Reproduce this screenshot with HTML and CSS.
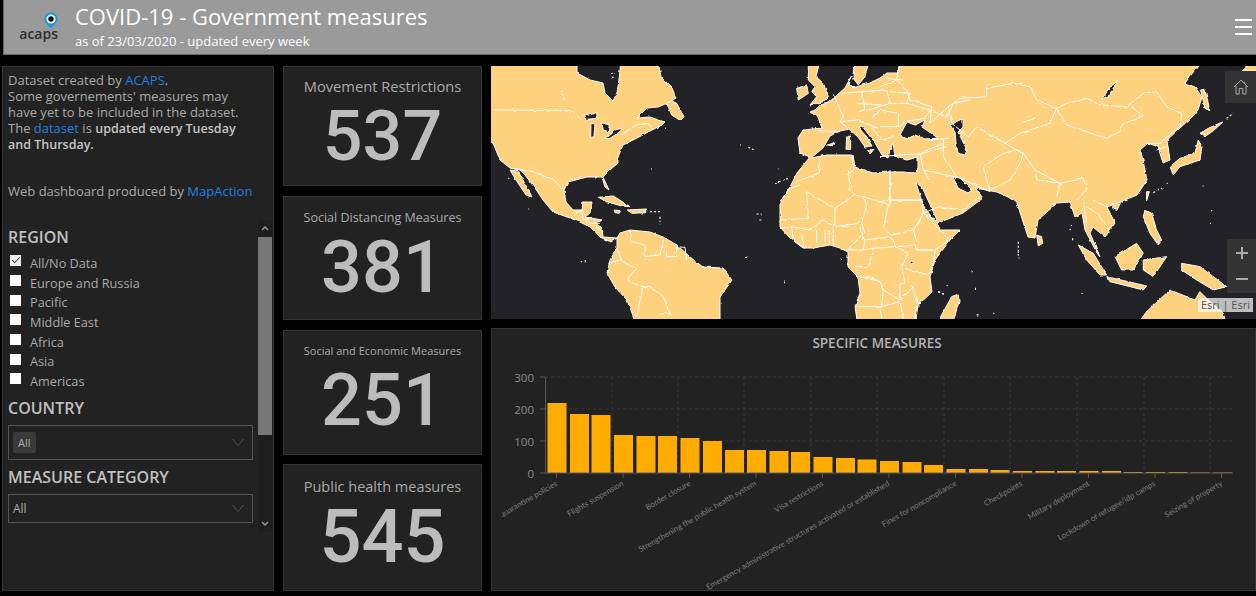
FILE: index.html
```html
<!DOCTYPE html>
<html lang="en">

<head>
    <meta charset="UTF-8">
    <meta name="viewport" content="width=device-width, initial-scale=1.0">
    <title>COVID-19 - Government measures</title>
    <link rel="stylesheet" href="styles.css">
</head>

<body>

    <header class="topbar">
        <div class="logo">
            <svg class="logo-pin" viewBox="0 0 14 17" width="14" height="17">
                <path d="M7 16.5 L2.2 11.6 A6.6 6.6 0 1 1 11.8 11.6 Z" fill="#1a9ad6" />
                <circle cx="7" cy="7" r="4.6" fill="#f2f6f8" />
                <circle cx="7" cy="7" r="2.7" fill="#111" />
            </svg>
            <span class="logo-name">acaps</span>
        </div>
        <div class="titles">
            <h1>COVID-19 - Government measures</h1>
            <p>as of 23/03/2020 - updated every week</p>
        </div>
        <div class="hamburger"><span></span><span></span><span></span></div>
    </header>

    <main class="dashboard">

        <section class="panel side">
            <div class="intro">
                <p>Dataset created by <a href="#">ACAPS</a>.<br>
                    Some governements' measures may<br>
                    have yet to be included in the dataset.<br>
                    The <a href="#">dataset</a> is <b>updated every Tuesday<br>
                    and Thursday.</b></p>
                <p class="credit">Web dashboard produced by <a href="#">MapAction</a></p>
            </div>

            <div class="filters">
                <div class="filter-list">
                    <h3>REGION</h3>
                    <ul class="regions">
                        <li><i class="box checked"></i>All/No Data</li>
                        <li><i class="box"></i>Europe and Russia</li>
                        <li><i class="box"></i>Pacific</li>
                        <li><i class="box"></i>Middle East</li>
                        <li><i class="box"></i>Africa</li>
                        <li><i class="box"></i>Asia</li>
                        <li><i class="box"></i>Americas</li>
                    </ul>
                    <h3 class="country-title">COUNTRY</h3>
                    <div class="select select-tall"><span class="chip">All</span><i class="caret"></i></div>
                    <h3 class="category-title">MEASURE CATEGORY</h3>
                    <div class="select select-short"><span>All</span><i class="caret"></i></div>
                </div>
                <div class="scrollbar">
                    <svg class="arrow" viewBox="0 0 14 17"><path d="M4 10 L7 7 L10 10" /></svg>
                    <div class="thumb"></div>
                    <svg class="arrow" viewBox="0 0 14 17"><path d="M4 7 L7 10 L10 7" /></svg>
                </div>
            </div>
        </section>

        <section class="stats">
            <div class="panel stat stat-a">
                <div class="stat-label">Movement Restrictions</div>
                <div class="stat-value">537</div>
            </div>
            <div class="panel stat stat-b">
                <div class="stat-label">Social Distancing Measures</div>
                <div class="stat-value">381</div>
            </div>
            <div class="panel stat stat-c">
                <div class="stat-label">Social and Economic Measures</div>
                <div class="stat-value">251</div>
            </div>
            <div class="panel stat stat-d">
                <div class="stat-label">Public health measures</div>
                <div class="stat-value">545</div>
            </div>
        </section>

        <section class="right">
            <div class="map">
                <svg class="world" viewBox="491 66 765 253" preserveAspectRatio="none">
                    <defs>
                        <!-- roughens the hand drawn coastlines -->
                        <filter id="rough" filterUnits="userSpaceOnUse" x="480" y="55" width="790" height="275">
                            <feTurbulence type="fractalNoise" baseFrequency="0.16" numOctaves="2" seed="4" />
                            <feDisplacementMap in="SourceGraphic" scale="2.6" xChannelSelector="R" yChannelSelector="G" />
                        </filter>
                    </defs>
                    <g filter="url(#rough)">
                    <!-- north america -->
                    <path class="land" d="M484 60 L577 60 L577 73 L590 80 L603 83 L605 93 L613 101 L617 93 L619 80 L621 60 L658 60 L661 77 L672 88 L676 98 L670 102 L658 107 L647 108 L637 118 L650 117 L665 122 L662 125 L650 131 L637 138 L623 145 L618 157 L618 163 L610 170 L603 177 L609 190 L605 187 L602 177 L587 177 L568 182 L564 190 L566 202 L573 210 L582 210 L583 202 L592 202 L590 213 L585 217 L602 220 L595 223 L602 228 L603 237 L617 238 L611 242 L600 237 L590 227 L580 222 L570 218 L553 212 L543 200 L535 188 L525 175 L520 170 L510 168 L500 160 L493 143 L484 140 Z" />
                    <path class="land" d="M510 170 L518 171 L530 193 L532 197 L526 195 L516 180 Z" />
                    <!-- south america -->
                    <path class="land" d="M617 238 L620 233 L630 230 L650 232 L663 237 L677 245 L690 257 L703 267 L723 268 L732 280 L720 297 L720 326 L637 326 L627 300 L615 287 L607 273 L610 260 L617 248 Z" />
                    <!-- africa and eurasia -->
                    <path class="land" d="M900 58 L898 73 L887 73 L880 78 L870 83 L862 85 L853 88 L848 83 L852 75 L845 88 L837 95 L828 103 L820 105 L815 110 L810 112 L818 117 L822 128 L803 130 L798 138 L800 153 L810 157 L797 173 L790 187 L780 202 L780 227 L790 238 L803 248 L813 248 L830 245 L840 248 L848 252 L848 267 L858 277 L860 293 L855 307 L858 326 L915 326 L918 305 L932 292 L930 277 L935 260 L950 240 L960 230 L940 230 L938 223 L963 213 L983 198 L975 188 L997 192 L1008 197 L1017 203 L1028 237 L1035 238 L1038 220 L1057 203 L1070 202 L1075 217 L1082 213 L1085 230 L1097 253 L1100 257 L1090 233 L1093 227 L1105 237 L1115 223 L1107 207 L1120 202 L1137 195 L1147 180 L1143 160 L1140 150 L1148 143 L1158 147 L1163 163 L1170 160 L1167 140 L1192 117 L1198 110 L1202 97 L1195 87 L1185 83 L1204 58 Z" />
                    <path class="land" d="M1242 71 L1250 64 L1260 62 L1260 71 Z" />
                    <!-- inland seas -->
                    <path class="sea" d="M811 158 L823 148 L830 136 L840 131 L849 129 L858 137 L865 147 L872 146 L867 137 L858 127 L862 126 L875 143 L882 155 L888 158 L890 150 L893 143 L895 157 L907 160 L918 157 L918 168 L915 173 L903 172 L890 172 L873 173 L855 167 L853 155 L840 155 L827 155 Z" />
                    <path class="sea" d="M900 135 L907 122 L915 125 L925 120 L922 127 L938 138 L925 139 L915 135 L907 139 Z" />
                    <path class="sea" d="M950 125 L963 119 L963 127 L958 132 L967 150 L965 155 L958 153 L956 143 L955 132 Z" />
                    <path class="sea" d="M916 183 L922 187 L937 220 L935 222 L923 205 Z" />
                    <path class="sea" d="M953 177 L960 178 L972 190 L968 193 L958 188 Z" />

                    <g transform="translate(490 60) scale(.3333)">
                        <path class="land" d="M530 130 L545 122 L560 130 L582 170 L572 182 L545 165 Z" />
                        <path class="land" d="M325 412 L370 408 L420 440 L395 438 L350 425 Z" />
                        <path class="land" d="M412 450 L470 447 L470 458 L425 460 Z" />
                        <path class="land" d="M372 450 L392 452 L388 460 L375 458 Z" />
                        <path class="sea" d="M280 170 L320 158 L322 175 L290 178 Z" />
                        <path class="sea" d="M303 190 L315 192 L312 230 L302 232 Z" />
                        <path class="sea" d="M335 188 L358 195 L355 215 L340 210 Z" />
                        <path class="sea" d="M345 235 L375 210 L395 205 L392 213 L360 235 Z" />
                        <path class="border" d="M15 150 L245 152 L275 180 M395 225 L440 195 L475 190 L490 210 M65 325 L130 335 L165 350 L190 358 L215 385 L225 385 M245 470 L275 450 L280 480 L305 472 M272 470 L300 490 L330 490 M318 500 L340 515" />
                        <path class="border" d="M420 512 L425 545 L465 555 L465 590 L510 585 L520 540 M525 560 L530 590 L560 590 L560 560 L585 562 L590 600 M355 610 L390 600 L440 625 L415 655 L415 665 L460 680 L450 720 L440 770 M380 565 L395 600 M460 680 L480 680 L520 710 L530 740 L545 770 M505 762 L540 760" />
                        <path class="speck" d="M362 40 h14 M365 55 h10 M215 90 l8 30 M750 255 h3 M775 262 l22 10 M483 327 h3 M865 322 v3 M855 370 l40 -15 M800 462 h15 M808 480 h6 M765 595 h6 M272 605 h16 M885 663 h3 M115 447 h3 M55 355 h3 M525 205 h3 M480 455 h30 M510 470 v25" />
                    </g>

                    <g transform="translate(790 60) scale(.3333)">
                        <path class="land" d="M55 10 L88 10 L78 50 L100 70 L115 110 L100 125 L60 135 L80 110 L65 95 L75 80 L55 60 Z" />
                        <path class="land" d="M20 85 L50 75 L55 100 L25 120 Z" />
                        <path class="land" d="M195 0 L238 0 L225 50 L205 75 L192 58 Z" />
                        <path class="land" d="M170 230 L182 228 L182 268 L168 268 Z" />
                        <path class="land" d="M232 272 L252 268 L240 282 Z" />
                        <path class="land" d="M112 255 L135 248 L130 258 Z" />
                        <path class="border" d="M85 212 L150 215 M130 100 L140 125 L160 170 L150 185 L175 205 M155 100 L215 95 L225 150 L205 155 M215 95 L290 90 L300 130 L235 150 M290 55 L340 60 M300 95 L360 100 L350 130 L295 130 M350 130 L420 150 L405 175 L345 185 L330 200 M270 150 L325 160 L325 200 L270 200 M150 185 L205 180 M205 180 L265 205 M245 205 L275 235 M260 245 L310 230 M380 285 L470 260 M415 240 L480 235 M420 150 L470 170 L490 130 L540 120 M185 285 L190 330 L170 345 M90 295 L85 340 L20 365 M300 340 L300 390 M320 55 L330 18 M200 130 L275 135 M240 180 L270 150" />
                    </g>

                    <g transform="translate(780 170) scale(.3333)">
                        <path class="land" d="M482 440 L515 380 L535 372 L537 395 L518 460 L482 460 Z" />
                        <circle class="sea" cx="395" cy="279" r="5" />
                        <path class="border" d="M60 45 L30 55 L0 95 M0 150 L85 145 L80 65 L165 115 M205 0 L210 60 L225 75 L165 115 M225 75 L250 80 L330 105 L330 0 M330 90 L425 92 M250 80 L260 105 L245 160 L255 190 M325 105 L310 175 L335 195 M165 170 L130 150 L90 180 L35 170 L0 175 M165 115 L165 170 L240 160 M160 170 L160 225 M240 170 L245 195 L205 240 M110 180 L110 220 M135 180 L135 220 M148 180 L148 220 M35 170 L40 210 L75 235 M65 190 L70 230 M245 195 L255 210 L330 200 L350 230 L405 225 M255 210 L250 240 M280 235 L350 230 L385 250 L365 290 L375 340 L360 340 L360 390 L310 360 L300 335 L265 320 L240 318 M205 240 L250 240 L280 235 L265 290 L225 290 M335 195 L400 180 L410 215 M400 180 L430 130 L470 170 L510 210 L465 240 L410 240 L405 225 M410 240 L465 240 L460 280 L445 315 L375 295 M425 92 L430 130 L465 150 M240 318 L300 335 L310 360 L305 410 L225 410 M360 390 L400 350 L410 400 L405 445 M305 410 L360 395 L370 445 M300 415 L305 445 M395 345 L412 390 L418 410" />
                        <path class="speck" d="M15 335 h3 M180 268 h8 M475 365 l18 8 M500 347 h3" />
                    </g>

                    <g transform="translate(880 0) scale(.3333)">
                        <path class="land" d="M870 500 L900 475 L945 460 L955 420 L966 440 L960 480 L900 500 L880 525 Z" />
                        <path class="land" d="M960 400 L985 385 L1030 365 L1000 392 L975 410 Z" />
                        <path class="land" d="M962 270 L975 268 L990 332 L975 325 Z" />
                        <path class="land" d="M800 575 L808 575 L800 602 Z" />
                        <path class="land" d="M795 630 L815 640 L830 690 L845 720 L835 735 L810 700 L790 650 Z" />
                        <path class="land" d="M595 735 L640 760 L680 825 L660 825 L620 780 Z" />
                        <path class="land" d="M680 830 L800 858 L790 870 L690 845 Z" />
                        <path class="land" d="M705 770 L770 730 L790 760 L760 810 L725 810 Z" />
                        <path class="land" d="M790 780 L860 770 L820 830 L790 810 Z" />
                        <path class="land" d="M905 790 L960 800 L1040 860 L1000 870 L950 840 L905 810 Z" />
                        <path class="land" d="M770 975 L800 935 L870 870 L945 900 L960 875 L985 900 L1030 940 L1040 975 Z" />
                        <path class="land" d="M470 705 L485 710 L488 730 L475 738 Z" />
                        <path class="land" d="M700 610 L720 612 L710 632 L698 625 Z" />
                        <path class="sea" d="M705 245 L712 240 L690 285 L665 297 Z" />
                        <path class="border" d="M0 260 L50 240 L80 270 L90 300 L155 320 L150 370 L205 320 M205 320 L240 295 L320 290 L320 265 L400 250 L450 260 L470 300 L530 325 L560 310 L620 295 L660 315 L740 320 L790 280 L830 275 L860 320 L905 340 L900 380 L870 405 L840 430 L805 430 M530 325 L560 375 L650 405 L680 415 L720 395 L730 370 L790 350 L755 320 M530 325 L510 370 L420 400 L375 430 L430 460 L465 510 L540 550 L610 535 L620 570 L590 600 M205 320 L215 370 L265 410 L290 380 L375 430 M320 400 L375 430 M190 420 L190 470 L230 530 L330 575 L310 500 M310 500 L370 460 L410 450 L430 460 M330 570 L390 540 L420 490 L430 460 M465 510 L470 540 L540 550 M530 590 L540 550 M610 600 L620 670 M640 600 L680 620 M650 640 L690 690 M620 620 L650 640 M120 460 L190 430 M130 510 L220 530 M130 510 L150 540 M175 620 L250 630 L270 610 M270 610 L300 590 M830 450 L860 440 M0 470 L120 460 L130 510 M30 520 L30 600 L0 605 M30 600 L130 600 M105 690 L130 640 L175 620 M420 370 L465 355" />
                        <path class="speck" d="M415 725 v50 M1040 355 l20 -15 M968 555 h3 M995 630 v4 M990 670 h3 M275 815 h3 M285 865 h3 M605 880 h3 M175 875 l20 10 M290 945 h6 M340 940 h3 M578 715 v8 M570 690 l6 -20 M860 550 h3 M820 578 l30 -15" />
                    </g>
                    </g>
                </svg>
                <div class="map-btn home">
                    <svg viewBox="0 0 16 16" width="16" height="16">
                        <path d="M1 8 L8 1.2 L15 8 M3 6.5 V15 H6.2 V9.5 H9.8 V15 H13 V6.5 M11.6 2.6 V5" />
                    </svg>
                </div>
                <div class="map-btn zoom">
                    <svg viewBox="0 0 14 14" width="14" height="14"><path d="M1 7 H13 M7 1 V13" /></svg>
                    <svg viewBox="0 0 14 14" width="14" height="14"><path d="M1 7 H13" /></svg>
                </div>
                <div class="attribution">Esri | Esri</div>
            </div>

            <div class="panel chart">
                <h4>SPECIFIC MEASURES</h4>
                <svg class="bars" viewBox="492 351 763 239">
                    <defs>
                        <clipPath id="chart-clip"><rect x="502" y="351" width="753" height="239" /></clipPath>
                    </defs>
                    <g class="grid">
                        <path d="M545 377 H1233 M545 409 H1233 M545 441 H1233" />
                        <path d="M612 377 V473 M678 377 V473 M744 377 V473 M811 377 V473 M877 377 V473 M944 377 V473 M1010 377 V473 M1077 377 V473 M1144 377 V473 M1210 377 V473" />
                    </g>
                    <g class="bar">
                        <rect x="547.5" y="403" width="19" height="70" />
                        <rect x="570" y="414" width="19" height="59" />
                        <rect x="591.5" y="415" width="19" height="58" />
                        <rect x="614" y="435" width="19" height="38" />
                        <rect x="636.5" y="436" width="19" height="37" />
                        <rect x="658" y="436" width="19" height="37" />
                        <rect x="680.5" y="438" width="19" height="35" />
                        <rect x="703" y="441" width="19" height="32" />
                        <rect x="725" y="450" width="19" height="23" />
                        <rect x="747" y="450" width="19" height="23" />
                        <rect x="769.5" y="451" width="19" height="22" />
                        <rect x="791" y="452" width="19" height="21" />
                        <rect x="813.5" y="457" width="19" height="16" />
                        <rect x="836" y="458" width="19" height="15" />
                        <rect x="857.5" y="459.5" width="19" height="13.5" />
                        <rect x="880" y="461" width="19" height="12" />
                        <rect x="902.5" y="462" width="19" height="11" />
                        <rect x="924" y="465" width="19" height="8" />
                        <rect x="946.5" y="469" width="19" height="4" />
                        <rect x="969" y="469" width="19" height="4" />
                        <rect x="990.5" y="470" width="19" height="3" />
                        <rect x="1013" y="471" width="19" height="2" />
                        <rect x="1035.5" y="471" width="19" height="2" />
                        <rect x="1057" y="471" width="19" height="2" />
                        <rect x="1079.5" y="471" width="19" height="2" />
                        <rect x="1102" y="471" width="19" height="2" />
                        <rect x="1123.5" y="472" width="19" height="1" />
                        <rect x="1146" y="472" width="19" height="1" />
                        <rect x="1168.5" y="472" width="19" height="1" />
                        <rect x="1191" y="472.5" width="19" height="0.5" />
                        <rect x="1213" y="472.5" width="19" height="0.5" />
                    </g>
                    <g class="axis">
                        <path d="M540 377 H545 M540 409 H545 M540 441 H545 M540 473 H1233 M545.5 377 V473" />
                        <path d="M556.5 473 V478 M623 473 V478 M689.5 473 V478 M756 473 V478 M822.5 473 V478 M889 473 V478 M955.5 473 V478 M1022 473 V478 M1088.5 473 V478 M1155 473 V478 M1221.5 473 V478" />
                    </g>
                    <g class="y-labels">
                        <text x="534" y="382">300</text>
                        <text x="534" y="414">200</text>
                        <text x="534" y="446">100</text>
                        <text x="534" y="478">0</text>
                    </g>
                    <g class="x-labels" clip-path="url(#chart-clip)">
                        <text transform="translate(558 485) rotate(-30)">Isolation and quarantine policies</text>
                        <text transform="translate(624 485) rotate(-30)">Flights suspension</text>
                        <text transform="translate(691 485) rotate(-30)">Border closure</text>
                        <text transform="translate(757 485) rotate(-30)">Strengthening the public health system</text>
                        <text transform="translate(824 485) rotate(-30)">Visa restrictions</text>
                        <text transform="translate(890 485) rotate(-30)">Emergency administrative structures activated or established</text>
                        <text transform="translate(957 485) rotate(-30)">Fines for noncompliance</text>
                        <text transform="translate(1023 485) rotate(-30)">Checkpoints</text>
                        <text transform="translate(1090 485) rotate(-30)">Military deployment</text>
                        <text transform="translate(1156 485) rotate(-30)">Lockdown of refugee/idp camps</text>
                        <text transform="translate(1223 485) rotate(-30)">Seizing of property</text>
                    </g>
                </svg>
            </div>
        </section>

    </main>

</body>

</html>
```

FILE: styles.css
```css
* {
    box-sizing: border-box;
}

html,
body {
    height: 100%;
}

body {
    font-family: 'Open Sans', sans-serif;
    background-color: #000;
    color: #aaa;
    margin: 0;
    overflow: hidden;
}

/* top bar */
.topbar {
    height: 55px;
    margin-left: 3px;
    background-color: #9a9a9a;
    border-left: 1px solid #666;
    border-bottom: 1px solid #6a6a6a;
    display: flex;
    align-items: center;
}

.logo {
    width: 71px;
    height: 54px;
    flex: none;
    display: flex;
    flex-direction: column;
    align-items: flex-end;
    padding: 12px 16px 0 0;
}

.logo-pin {
    margin-right: 1px;
    display: block;
}

.logo-name {
    font-size: 14px;
    font-weight: 600;
    line-height: 14px;
    color: #2e2e2e;
    margin-top: -2px;
    margin-right: 1px;
}

.titles {
    flex: 1;
    color: #fff;
    padding-bottom: 2px;
}

.titles h1 {
    font-size: 22px;
    font-weight: 400;
    line-height: 28px;
    margin: 0;
}

.titles p {
    font-size: 13px;
    line-height: 18px;
    margin: 2px 0 0;
}

.hamburger {
    width: 17px;
    margin-right: 4px;
    display: flex;
    flex-direction: column;
    gap: 5px;
}

.hamburger span {
    height: 2px;
    background-color: #fff;
}

/* layout */
.dashboard {
    height: 541px;
    padding: 11px 0 5px 2px;
    display: grid;
    grid-template-columns: 272px 199px 1fr;
    gap: 9px;
}

.panel {
    background-color: #222;
    border: 1px solid #363636;
}

/* left column */
.side {
    display: flex;
    flex-direction: column;
}

.intro {
    height: 153px;
    padding: 5px 5px 0;
    font-size: 13px;
    line-height: 16px;
    flex: none;
    white-space: nowrap;
}

.intro p {
    margin: 0;
}

.intro b {
    color: #c4c4c4;
    font-size: 12.5px;
    font-weight: 600;
    line-height: 1;
}

.intro a {
    color: #1f80e0;
    text-decoration: none;
}

.credit {
    padding-top: 31px;
}

.filters {
    height: 312px;
    display: flex;
}

.filter-list {
    flex: 1;
    padding: 7px 5px 0;
}

.filters h3 {
    font-size: 16px;
    font-weight: 600;
    line-height: 20px;
    color: #c0c0c0;
    margin: 0;
}

.regions {
    list-style: none;
    margin: 6px 0 0;
    padding: 0;
}

.regions li {
    height: 19.7px;
    font-size: 12.7px;
    line-height: 20px;
    display: flex;
    align-items: center;
}

.box {
    width: 11px;
    height: 11px;
    margin: -4px 9px 0 2px;
    background-color: #fff;
    position: relative;
}

.box.checked {
    background-color: #eee;
}

.box.checked::after {
    content: "";
    position: absolute;
    left: 2px;
    top: 2px;
    width: 7px;
    height: 3px;
    border-left: 1px solid #444;
    border-bottom: 1px solid #444;
    transform: rotate(-45deg);
}

.filters .country-title {
    margin-top: 7px;
}

.filters .category-title {
    margin-top: 7px;
}

.select {
    margin-top: 7px;
    border: 1px solid #555;
    display: flex;
    align-items: center;
    justify-content: space-between;
    padding: 0 8px 0 4px;
    font-size: 12px;
}

.select-tall {
    height: 35px;
}

.select-short {
    height: 29px;
}

.chip {
    background-color: #3a3a3a;
    border-radius: 2px;
    padding: 3px 5px;
    line-height: 15px;
    font-size: 11px;
}

.caret {
    width: 0;
    height: 0;
    border-left: 6px solid transparent;
    border-right: 6px solid transparent;
    border-top: 7px solid #555;
    position: relative;
}

.caret::after {
    content: "";
    position: absolute;
    left: -5px;
    top: -7px;
    border-left: 5px solid transparent;
    border-right: 5px solid transparent;
    border-top: 6px solid #222;
}

.scrollbar {
    width: 14px;
    margin-right: 1px;
    background-color: #1e1e1e;
    display: flex;
    flex-direction: column;
    justify-content: space-between;
}

.thumb {
    height: 198px;
    margin-bottom: auto;
    background-color: #777;
}

.arrow {
    width: 14px;
    height: 17px;
    display: block;
    flex: none;
}

.arrow path {
    fill: none;
    stroke: #999;
    stroke-width: 1.5;
}

/* stat cards */
.stats {
    display: grid;
    grid-template-rows: 120px 124.5px 125px 1fr;
    gap: 9.5px;
}

.stat {
    display: flex;
    flex-direction: column;
    align-items: center;
}

.stat-label {
    white-space: nowrap;
    color: #aaa;
    line-height: 20px;
}

.stat-value {
    font-family: Roboto, sans-serif;
    font-weight: 500;
    line-height: 74px;
    color: #bcbcbc;
    margin-top: 3px;
}

.stat-a .stat-label {
    font-size: 14.7px;
    margin-top: 9px;
}

.stat-a .stat-value {
    font-size: 70px;
}

.stat-b .stat-label {
    font-size: 12.5px;
    margin-top: 11px;
}

.stat-b .stat-value {
    font-size: 72px;
}

.stat-c .stat-label {
    font-size: 11px;
    margin-top: 10px;
}

.stat-c .stat-value {
    font-size: 72px;
}

.stat-d .stat-label {
    font-size: 14.5px;
    margin-top: 12px;
}

.stat-d .stat-value {
    font-size: 74px;
}

/* map and chart */
.right {
    display: grid;
    grid-template-rows: 253px 1fr;
    gap: 9px;
}

.map {
    position: relative;
    background-color: #232227;
    overflow: hidden;
}

.world {
    width: 100%;
    height: 100%;
    display: block;
}

.land {
    fill: #fed17f;
    stroke: #fff;
    stroke-width: 1;
    vector-effect: non-scaling-stroke;
}

.sea {
    fill: #232227;
    stroke: #fff;
    stroke-width: 1;
    vector-effect: non-scaling-stroke;
}

.border {
    fill: none;
    stroke: #fff;
    stroke-width: 1;
    vector-effect: non-scaling-stroke;
}

.speck {
    fill: none;
    stroke: #fff;
    stroke-width: 1.2;
    stroke-dasharray: 2 2;
    vector-effect: non-scaling-stroke;
}

.map-btn {
    position: absolute;
    right: 0;
    background-color: #333;
}

.map-btn path {
    fill: none;
    stroke: #aaa;
}

.home {
    top: 5px;
    width: 31px;
    height: 32px;
    display: flex;
    align-items: center;
    justify-content: center;
}

.home path {
    stroke-width: 1;
}

.zoom {
    top: 173px;
    width: 29px;
    height: 54px;
    padding: 7px 0;
    display: flex;
    flex-direction: column;
    align-items: center;
    gap: 12px;
}

.zoom path {
    stroke-width: 2;
}

.attribution {
    position: absolute;
    right: 3px;
    top: 232px;
    height: 14px;
    padding: 0 3px;
    font-size: 11px;
    line-height: 14px;
    color: #555;
    background-color: rgba(255, 255, 255, 0.7);
}

.chart {
    display: flex;
    flex-direction: column;
}

.chart h4 {
    font-size: 13.5px;
    font-weight: 600;
    line-height: 16px;
    color: #b4b4b4;
    text-align: center;
    margin: 6px 0 0 7px;
}

.bars {
    width: 763px;
    height: 239px;
    display: block;
}

.grid path {
    fill: none;
    stroke: #383838;
    stroke-width: 1;
    stroke-dasharray: 3 3;
}

.bar rect {
    fill: #ffab00;
}

.axis path {
    fill: none;
    stroke: #5a5a5a;
    stroke-width: 1;
}

.y-labels text {
    font-size: 11.5px;
    fill: #8c8c8c;
    text-anchor: end;
}

.x-labels text {
    font-family: Lato, sans-serif;
    font-size: 7.9px;
    fill: #7c7c7c;
    text-anchor: end;
}
```
